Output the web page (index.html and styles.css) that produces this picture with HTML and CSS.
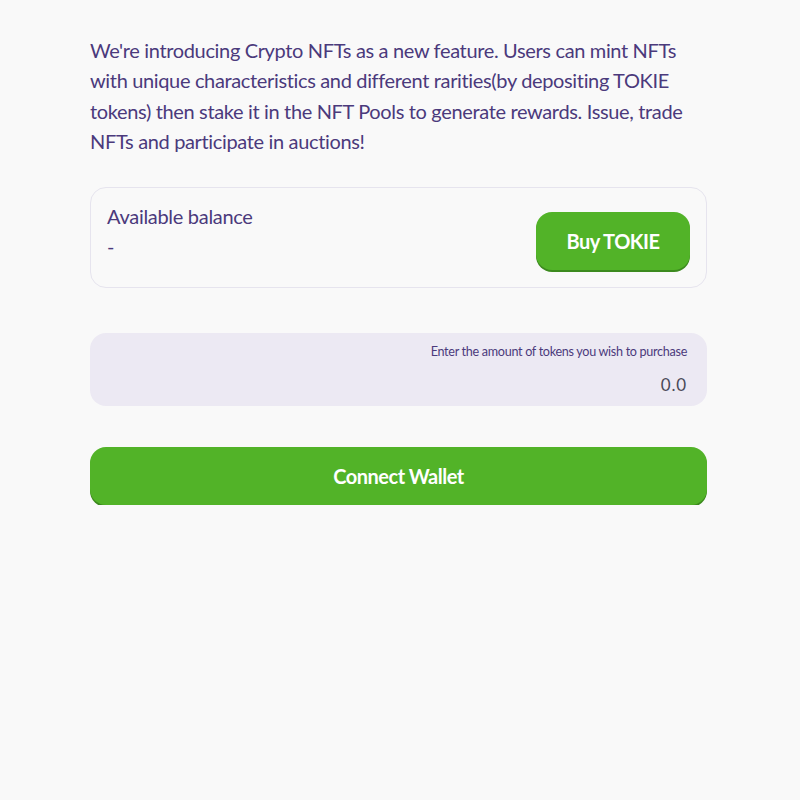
FILE: index.html
```html
<!DOCTYPE html>
<html>
<head>
<meta charset="utf-8">
<link rel="stylesheet" href="styles.css">
</head>
<body>
<main class="page">
  <p class="intro">We're introducing Crypto NFTs as a new feature. Users can mint NFTs with unique characteristics and different rarities(by depositing TOKIE tokens) then stake it in the NFT Pools to generate rewards. Issue, trade NFTs and participate in auctions!</p>
  <section class="balance-card">
    <div class="balance-info">
      <div class="balance-label">Available balance</div>
      <div class="balance-value">-</div>
    </div>
    <button class="btn btn-buy">Buy TOKIE</button>
  </section>
  <section class="amount-box">
    <div class="amount-label">Enter the amount of tokens you wish to purchase</div>
    <div class="amount-value">0.0</div>
  </section>
  <button class="btn btn-connect">Connect Wallet</button>
</main>
</body>
</html>
```
FILE: styles.css
```css
html, body {
  margin: 0;
  padding: 0;
  background: #f9f9f9;
}
body {
  font-family: Lato, "Open Sans", sans-serif;
  color: #4b3a7c;
}
.page {
  width: 617px;
  margin: 0 auto 0 90px;
  padding-top: 35px;
  display: flex;
  flex-direction: column;
}
.intro {
  margin: 0;
  font-size: 20px;
  line-height: 30.3px;
  letter-spacing: -0.35px;
}
.balance-card {
  margin-top: 31px;
  height: 101px;
  box-sizing: border-box;
  border: 1px solid #e6e4ee;
  border-radius: 16px;
  padding: 0 16px;
  display: flex;
  align-items: center;
  justify-content: space-between;
}
.balance-info {
  margin-top: -14px;
}
.balance-label {
  font-size: 20px;
  letter-spacing: -0.3px;
  line-height: 30px;
}
.balance-value {
  font-size: 20px;
  line-height: 30px;
}
.btn {
  border: none;
  background: #52b328;
  color: #fff;
  font-family: Lato, sans-serif;
  font-weight: 700;
  font-size: 20px;
  letter-spacing: -0.5px;
  box-shadow: 0 2px 0 #3c8a1e;
  cursor: pointer;
}
.btn-buy {
  width: 154px;
  height: 58px;
  border-radius: 16px;
  margin-top: 6px;
}
.amount-box {
  margin-top: 45px;
  height: 73px;
  box-sizing: border-box;
  background: #ece9f3;
  border-radius: 16px;
  padding: 11px 20px 0;
  display: flex;
  flex-direction: column;
  align-items: flex-end;
}
.amount-label {
  font-size: 12.6px;
  letter-spacing: -0.3px;
  line-height: 16px;
}
.amount-value {
  margin-top: 14px;
  font-size: 17px;
  color: #4a4a58;
  letter-spacing: 0.8px;
}
.btn-connect {
  margin-top: 41px;
  height: 58px;
  border-radius: 16px;
}
```
